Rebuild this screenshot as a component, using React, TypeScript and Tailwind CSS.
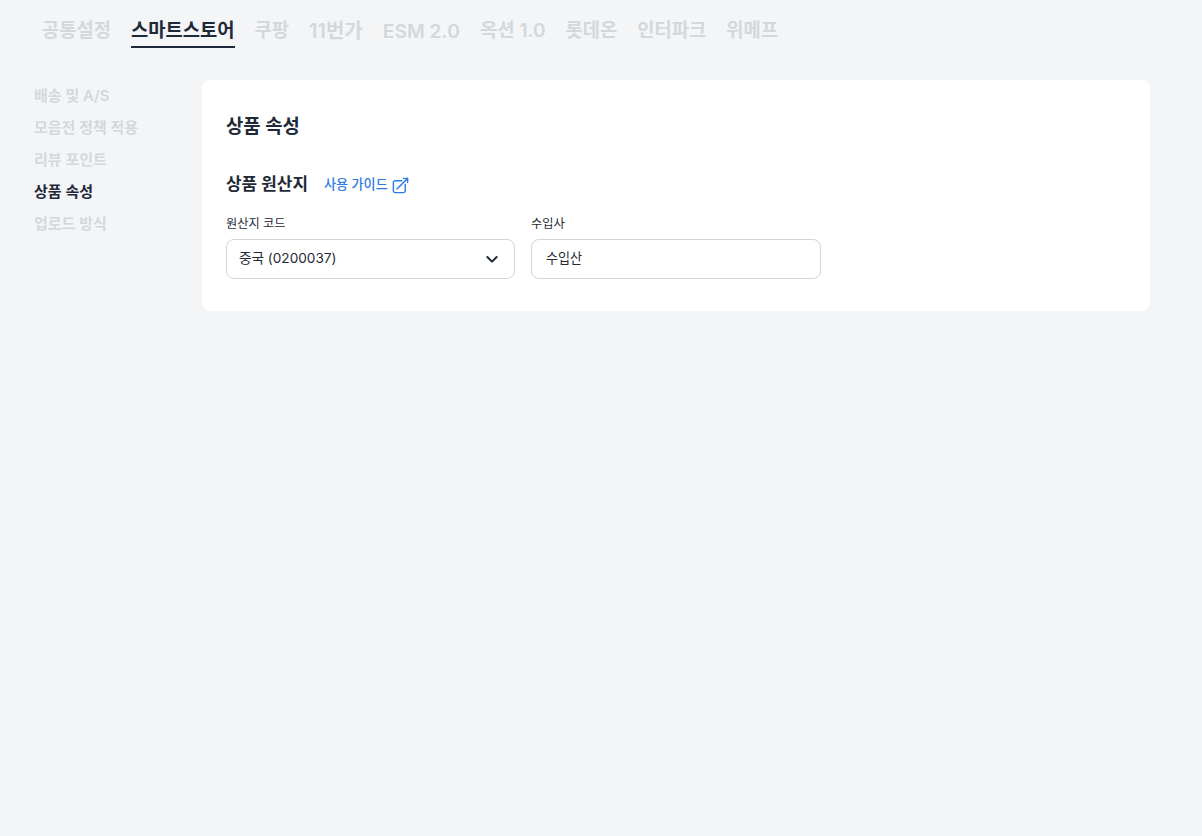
const F = "font-['Inter','Noto_Sans_CJK_KR',sans-serif]";
const tabs: [string, string][] = [
  ["공통설정", "text-[18.75px]"],
  ["스마트스토어", "text-[18.75px]"],
  ["쿠팡", "text-[18.75px]"],
  ["11번가", "text-[20px]"],
  ["ESM 2.0", "text-[19.3px]"],
  ["옥션 1.0", "text-[19px] tracking-[-0.05px]"],
  ["롯데온", "text-[18.75px]"],
  ["인터파크", "text-[18.75px]"],
  ["위메프", "text-[18.75px]"],
];
const side = ["배송 및 A/S", "모음전 정책 적용", "리뷰 포인트", "상품 속성", "업로드 방식"];

export default function App() {
  return (
    <div className={`${F} min-h-[836px] bg-[#f3f5f7] text-[#1f2937]`}>
      <nav className="flex gap-5 pl-[42px] pt-[16px] h-[64px]">
        {tabs.map(([t, c]) => (
          <div key={t} className={`h-[32px] leading-[30px] font-semibold ${c} ${t === "스마트스토어" ? "border-b-2 border-[#1e293b] text-[#1f2937]" : "text-[#d4d8dc]"}`}>{t}</div>
        ))}
      </nav>
      <div className="flex pl-[34px] pt-[16px] pr-[52px]">
        <aside className="w-[168px] shrink-0 flex flex-col">
          {side.map((s) => (
            <div key={s} className={`h-[32px] leading-[31px] text-[15px] font-semibold ${s === "상품 속성" ? "text-[#1f2937]" : "text-[#d4d8dc]"}`}>{s}</div>
          ))}
        </aside>
        <main className="flex-1 bg-white rounded-lg p-6 h-[231px]">
          <h2 className="text-[18.75px] leading-[28px] font-semibold mt-[9px]">상품 속성</h2>
          <div className="flex items-center mt-[30px] h-[28px]">
            <h3 className="text-[16.9px] font-semibold">상품 원산지</h3>
            <a className="ml-4 flex items-center gap-[3px] text-[13.1px] font-medium text-[#2f7be5]">
              사용 가이드
              <svg width="19" height="19" viewBox="0 0 24 24" fill="none" stroke="currentColor" strokeWidth="1.8" strokeLinecap="round" strokeLinejoin="round" className="mt-[1px]">
                <path d="M13.5 6H5.25A2.25 2.25 0 0 0 3 8.25v10.5A2.25 2.25 0 0 0 5.25 21h10.5A2.25 2.25 0 0 0 18 18.75V10.5m-10.5 6L21 3m0 0h-5.25M21 3v5.25" />
              </svg>
            </a>
          </div>
          <div className="flex gap-4 mt-[17px]">
            <div className="w-[289px]">
              <div className="text-[12.2px] leading-[16px] mb-[7px]">원산지 코드</div>
              <div className="h-[40px] border border-[#d1d5db] rounded-lg flex items-center justify-between pl-3 pr-[14px] pb-[1px] text-[13.6px]">
                중국 (0200037)
                <svg width="16" height="16" viewBox="0 0 24 24" fill="none" stroke="currentColor" strokeWidth="3" strokeLinecap="round" strokeLinejoin="round"><path d="M5 9l7 7 7-7" /></svg>
              </div>
            </div>
            <div className="w-[290px]">
              <div className="text-[12.2px] leading-[16px] mb-[7px]">수입사</div>
              <div className="h-[40px] border border-[#d1d5db] rounded-lg flex items-center px-[14px] text-[13.1px]">수입산</div>
            </div>
          </div>
        </main>
      </div>
    </div>
  );
}
